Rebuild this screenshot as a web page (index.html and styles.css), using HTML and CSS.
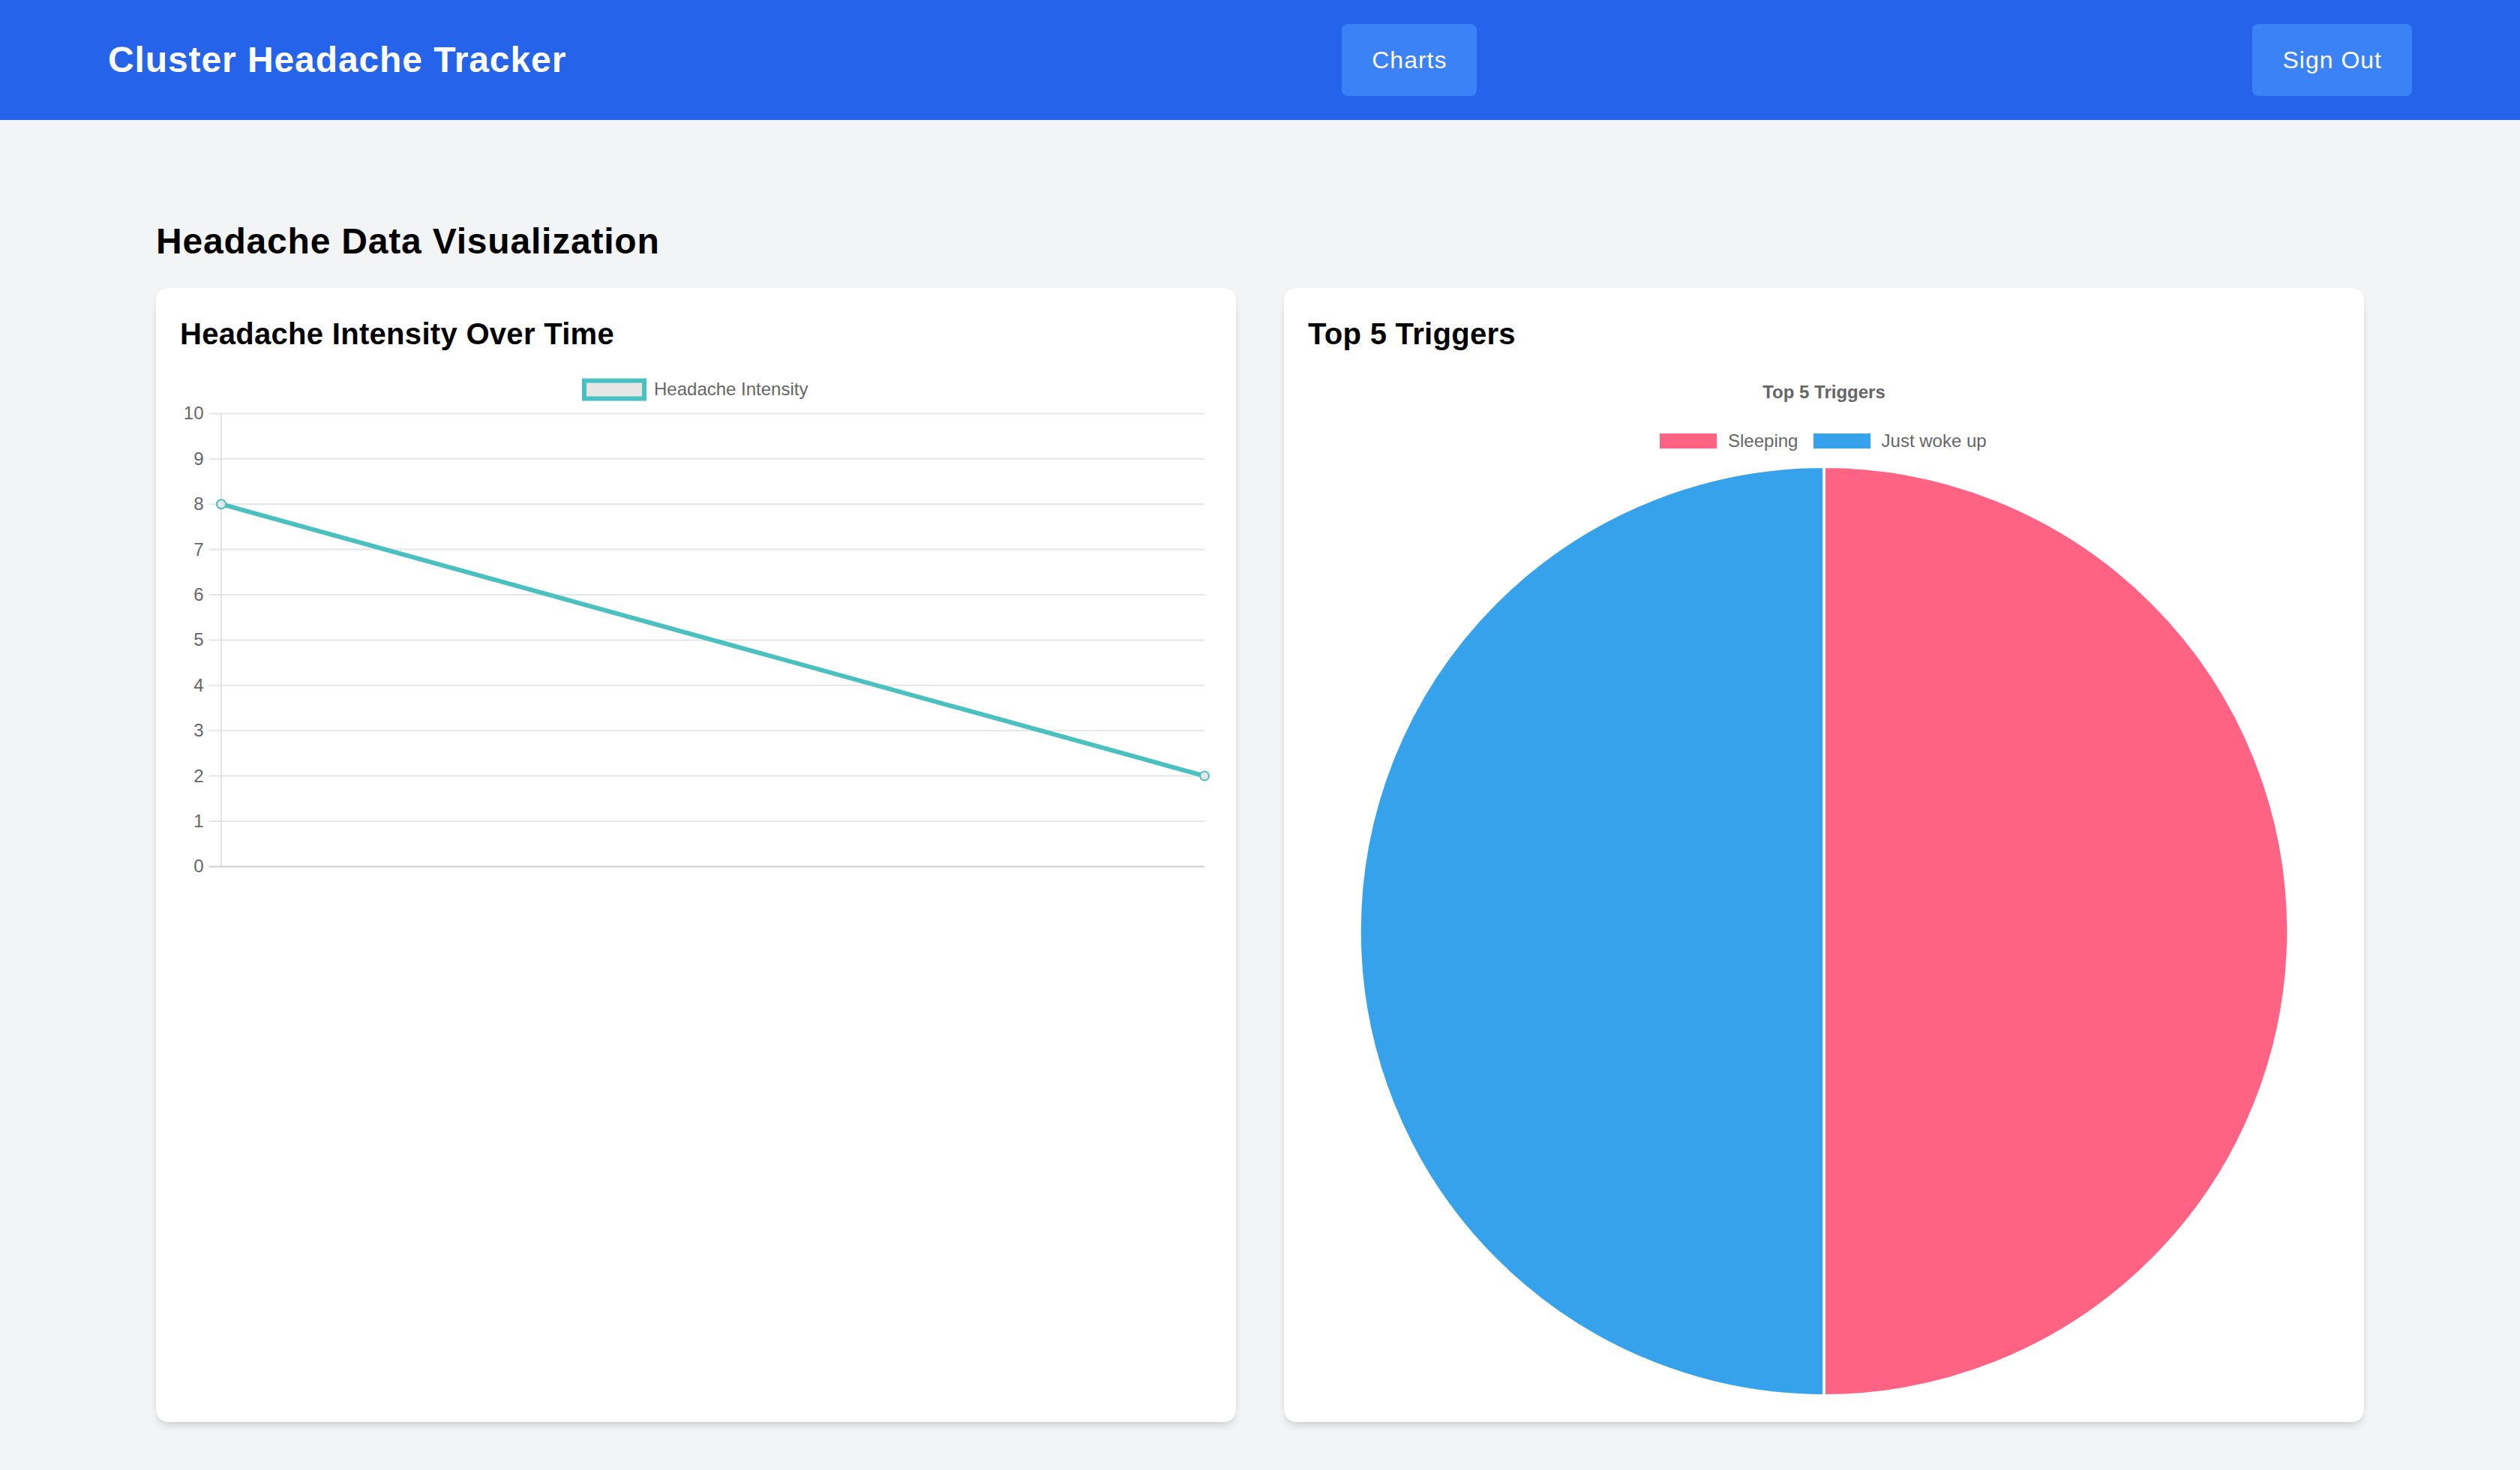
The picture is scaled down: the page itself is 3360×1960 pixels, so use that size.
FILE: index.html
```html
<!DOCTYPE html>
<html lang="en">
<head>
<meta charset="utf-8">
<title>Cluster Headache Tracker</title>
<link rel="stylesheet" href="styles.css">
</head>
<body>
<header class="topbar">
  <div class="topbar-inner">
    <h1 class="brand">Cluster Headache Tracker</h1>
    <a class="btn" href="#">Charts</a>
    <a class="btn" href="#">Sign Out</a>
  </div>
</header>
<main class="page">
  <h2 class="page-title">Headache Data Visualization</h2>
  <div class="card-grid">
    <section class="card">
      <h3 class="card-title">Headache Intensity Over Time</h3>
      <svg class="chart chart-line" width="1376" height="688" viewBox="0 0 1376 688">
        <rect class="legend-box" x="539" y="19.5" width="80" height="24"/>
        <text class="chart-text" x="632" y="38.7">Headache Intensity</text>
        <g class="grid">
          <line x1="39" y1="63.4" x2="1366" y2="63.4"/>
          <line x1="39" y1="123.8" x2="1366" y2="123.8"/>
          <line x1="39" y1="184.2" x2="1366" y2="184.2"/>
          <line x1="39" y1="244.6" x2="1366" y2="244.6"/>
          <line x1="39" y1="305" x2="1366" y2="305"/>
          <line x1="39" y1="365.4" x2="1366" y2="365.4"/>
          <line x1="39" y1="425.8" x2="1366" y2="425.8"/>
          <line x1="39" y1="486.2" x2="1366" y2="486.2"/>
          <line x1="39" y1="546.6" x2="1366" y2="546.6"/>
          <line x1="39" y1="607" x2="1366" y2="607"/>
          <line x1="55" y1="63.4" x2="55" y2="667.4"/>
        </g>
        <line class="axis" x1="39" y1="667.4" x2="1366" y2="667.4"/>
        <g class="ticks">
          <text x="31.5" y="71.4">10</text>
          <text x="31.5" y="131.8">9</text>
          <text x="31.5" y="192.2">8</text>
          <text x="31.5" y="252.6">7</text>
          <text x="31.5" y="313">6</text>
          <text x="31.5" y="373.4">5</text>
          <text x="31.5" y="433.8">4</text>
          <text x="31.5" y="494.2">3</text>
          <text x="31.5" y="554.6">2</text>
          <text x="31.5" y="615">1</text>
          <text x="31.5" y="675.4">0</text>
        </g>
        <line class="series" x1="55" y1="184.2" x2="1366" y2="546.6"/>
        <circle class="point" cx="55" cy="184.2" r="6"/>
        <circle class="point" cx="1366" cy="546.6" r="6"/>
      </svg>
    </section>
    <section class="card">
      <h3 class="card-title">Top 5 Triggers</h3>
      <svg class="chart chart-pie" width="1376" height="1376" viewBox="0 0 1376 1376">
        <text class="chart-title" x="688" y="42.7">Top 5 Triggers</text>
        <rect class="slice-pink" x="467" y="88" width="80" height="24"/>
        <text class="chart-text" x="560" y="108">Sleeping</text>
        <rect class="slice-blue" x="672" y="88" width="80" height="24"/>
        <text class="chart-text" x="764.6" y="108">Just woke up</text>
        <path class="slice-pink" d="M688 134 A619.5 619.5 0 0 1 688 1373 Z"/>
        <path class="slice-blue" d="M688 1373 A619.5 619.5 0 0 1 688 134 Z"/>
      </svg>
    </section>
  </div>
</main>
</body>
</html>
```
FILE: styles.css
```css
html, body {
  margin: 0;
  padding: 0;
}
body {
  background: #f3f4f6;
  font-family: "Liberation Sans", Arial, Helvetica, sans-serif;
  color: #000;
  width: 3360px;
  min-height: 1960px;
}
.topbar {
  background: #2563eb;
  height: 160px;
}
.topbar-inner {
  width: 3072px;
  margin: 0 auto;
  height: 160px;
  display: flex;
  align-items: center;
  justify-content: space-between;
}
.brand {
  margin: 0;
  color: #fff;
  font-size: 48px;
  line-height: 64px;
  font-weight: 700;
  letter-spacing: 0.9px;
}
.btn {
  display: block;
  background: #3b82f6;
  color: #fff;
  text-decoration: none;
  font-size: 32px;
  line-height: 48px;
  letter-spacing: 1px;
  padding: 24px 40px;
  border-radius: 8px;
}
.page {
  width: 3072px;
  margin: 0 auto;
  box-sizing: border-box;
  padding: 130px 64px 64px;
}
.page-title {
  margin: 0 0 30px;
  font-size: 48px;
  line-height: 64px;
  font-weight: 700;
  letter-spacing: 0.8px;
}
.card-grid {
  display: grid;
  grid-template-columns: 1fr 1fr;
  gap: 64px;
}
.card {
  background: #fff;
  border-radius: 16px;
  padding: 32px;
  box-shadow: 0 8px 12px -2px rgba(0,0,0,0.1), 0 4px 8px -4px rgba(0,0,0,0.1);
}
.card-title {
  margin: 0 0 14px;
  font-size: 40px;
  line-height: 58px;
  font-weight: 700;
  letter-spacing: 0.3px;
}
.chart {
  display: block;
}
.chart text {
  font-family: "Liberation Sans", Arial, Helvetica, sans-serif;
  fill: #666;
}
.chart-text {
  font-size: 24px;
}
.chart-title {
  font-size: 24px;
  font-weight: 700;
  text-anchor: middle;
}
.legend-box {
  fill: #e6e6e6;
  stroke: #4bc0c0;
  stroke-width: 6;
}
.grid line {
  stroke: #e5e5e5;
  stroke-width: 2;
}
.axis {
  stroke: #cfcfcf;
  stroke-width: 2;
}
.ticks text {
  font-size: 24px;
  text-anchor: end;
}
.series {
  stroke: #4bc0c0;
  stroke-width: 6;
}
.point {
  fill: #e6e6e6;
  stroke: #4bc0c0;
  stroke-width: 2;
}
.slice-pink {
  fill: #ff6384;
  stroke: #fff;
  stroke-width: 4;
}
.slice-blue {
  fill: #36a2eb;
  stroke: #fff;
  stroke-width: 4;
}
```
